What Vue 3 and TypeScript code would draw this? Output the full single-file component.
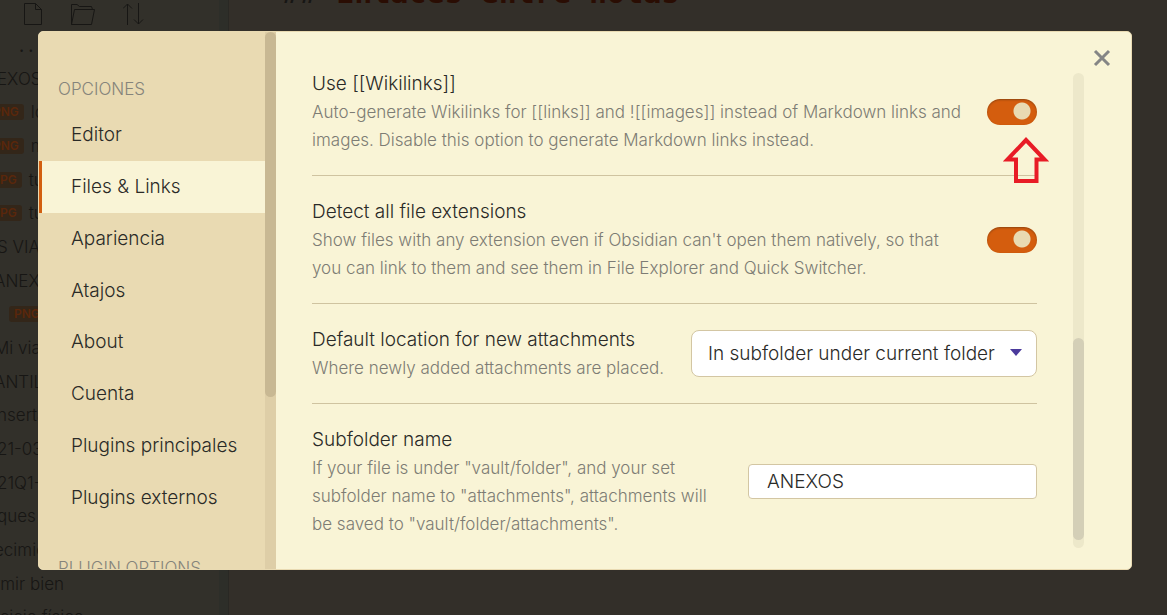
<script setup lang="ts">
import { ref } from 'vue'

interface FileRow {
  label: string
  tag?: string
  kind: 'folder' | 'page' | 'media' | 'nested'
}

const files: FileRow[] = [
  { label: 'EXOS', kind: 'folder' },
  { label: 'lo', tag: 'PNG', kind: 'media' },
  { label: 'm', tag: 'PNG', kind: 'media' },
  { label: 'tu', tag: 'JPG', kind: 'media' },
  { label: 'tu', tag: 'JPG', kind: 'media' },
  { label: 'S VIAJ', kind: 'folder' },
  { label: 'ANEXO', kind: 'page' },
  { label: '', tag: 'PNG', kind: 'nested' },
  { label: 'Mi viaj', kind: 'page' },
  { label: 'ANTIL', kind: 'page' },
  { label: 'nserta', kind: 'folder' },
  { label: '21-03', kind: 'folder' },
  { label: '21Q1-', kind: 'folder' },
  { label: 'ques', kind: 'folder' },
  { label: 'ecimie', kind: 'page' },
  { label: 'rmir bien', kind: 'page' },
  { label: 'rcicio físico', kind: 'page' },
]

const tabs = ['Editor', 'Files & Links', 'Apariencia', 'Atajos', 'About', 'Cuenta', 'Plugins principales', 'Plugins externos']
const active = ref('Files & Links')
const wikilinks = ref(true)
const allExtensions = ref(true)
const location = ref('In subfolder under current folder')
const subfolder = ref('ANEXOS')
</script>

<template>
  <div class="app">
    <aside class="explorer">
      <div class="tools">
        <svg width="20" height="24" viewBox="0 0 20 24"><path d="M1.500 1.500H12.500L18.500 7.500V22.500H1.500ZM12.500 1.500V7.500H18.500" /></svg>
        <svg width="26" height="24" viewBox="0 0 26 24"><path d="M1.500 22.500V2.500H7L9.500 4.500H21.500L22.500 7.500M1.500 22.500L4.500 7.500H24.500L21.500 22.500Z" /></svg>
        <svg width="24" height="24" viewBox="0 0 24 24"><path d="M4.500 23V2M0 6.500L4.500 2L9 6.500M15.500 1V22M11 17.500L15.500 22L20 17.500" /></svg>
      </div>
      <div class="dots">...</div>
      <ul class="files">
        <li v-for="(file, i) in files" :key="i" :class="file.kind">
          <span v-if="file.tag" class="tag">{{ file.tag }}</span>
          <span v-if="file.label">{{ file.label }}</span>
        </li>
      </ul>
    </aside>
    <div class="splitter"></div>
    <main class="note"><h2><span class="hashes">##</span> Enlaces entre notas</h2></main>

    <div class="modal" role="dialog" aria-label="Opciones">
      <nav class="side">
        <div class="menu">
          <h3>OPCIONES</h3>
          <div class="tabs">
            <button v-for="tab in tabs" :key="tab" type="button" :class="{ active: tab === active }" @click="active = tab">{{ tab }}</button>
          </div>
          <h3 class="next">PLUGIN OPTIONS</h3>
        </div>
        <div class="bar side-bar"><div class="thumb"></div></div>
      </nav>

      <section class="content">
        <div class="settings">
          <div class="setting">
            <div class="info">
              <label class="name" for="wikilinks">Use [[Wikilinks]]</label>
              <p>Auto-generate Wikilinks for [[links]] and ![[images]] instead of Markdown links and images. Disable this option to generate Markdown links instead.</p>
            </div>
            <div class="toggle-box">
              <input id="wikilinks" v-model="wikilinks" class="toggle" type="checkbox" />
              <svg class="pointer" width="46" height="50" viewBox="0 0 46 50"><path d="M23 4L41.500 23.500H33.500V45H13V23.500H4.500Z" /></svg>
            </div>
          </div>
          <div class="setting">
            <div class="info">
              <label class="name" for="extensions">Detect all file extensions</label>
              <p>Show files with any extension even if Obsidian can't open them natively, so that you can link to them and see them in File Explorer and Quick Switcher.</p>
            </div>
            <input id="extensions" v-model="allExtensions" class="toggle" type="checkbox" />
          </div>
          <div class="setting">
            <div class="info">
              <label class="name" for="location">Default location for new attachments</label>
              <p>Where newly added attachments are placed.</p>
            </div>
            <div class="select-box">
              <select id="location" v-model="location">
                <option>In subfolder under current folder</option>
              </select>
              <svg class="caret" width="12" height="7" viewBox="0 0 12 7"><path d="M0 0H12L6 7Z" /></svg>
            </div>
          </div>
          <div class="setting">
            <div class="info">
              <label class="name" for="subfolder">Subfolder name</label>
              <p>If your file is under "vault/folder", and your set subfolder name to "attachments", attachments will be saved to "vault/folder/attachments".</p>
            </div>
            <input id="subfolder" v-model="subfolder" class="text" type="text" />
          </div>
        </div>
        <div class="bar content-bar"><div class="thumb"></div></div>
        <button class="close" type="button" aria-label="Close">
          <svg width="18" height="18" viewBox="0 0 18 18"><path d="M2 2L16 16M16 2L2 16" /></svg>
        </button>
      </section>
    </div>
  </div>
</template>

<style>
body {
  margin: 0;
  overflow: hidden;
}
</style>

<style scoped>
* {
  box-sizing: border-box;
}

.app {
  position: relative;
  display: flex;
  height: 100vh;
  overflow: hidden;
  background: #332f29;
  color: #2a2a27;
  font-family: Inter, sans-serif;
  font-weight: 300;
  font-size: 19px;
}

.explorer {
  width: 219px;
  flex: none;
  background: #32302a;
  color: #171614;
  font-size: 17px;
}

.tools {
  display: flex;
  gap: 27px;
  height: 36px;
  padding: 2px 0 0 23px;
}

.tools svg {
  fill: none;
  stroke: #171614;
  stroke-width: 1;
}

.dots {
  height: 26px;
  padding-left: 19px;
  font-weight: 500;
  line-height: 20px;
  letter-spacing: 4px;
}

.files {
  display: grid;
  grid-auto-rows: 1fr;
  height: 572px;
  margin: 0;
  padding: 0;
  list-style: none;
  white-space: nowrap;
}

.files li {
  display: flex;
  align-items: center;
  gap: 7px;
}

.files .folder {
  margin-left: -3px;
}

.files .page {
  margin-left: -6px;
}

.files .media {
  margin-left: -12px;
}

.files .nested {
  padding-left: 9px;
}

.tag {
  padding: 1px 5px;
  border-radius: 3px;
  background: #332619;
  color: #5a270b;
  font-size: 12px;
  font-weight: 600;
  line-height: 14px;
}

.splitter {
  width: 10px;
  flex: none;
  background: #2d2e29;
  border-right: 1px solid #292824;
}

.note {
  flex: 1;
  padding-left: 53px;
}

.note h2 {
  margin: -25px 0 0;
  color: #2a0d03;
  font: 700 30px/36px "DejaVu Sans Mono", monospace;
}

.hashes {
  color: #171614;
  font-weight: 400;
}

.modal {
  position: absolute;
  inset: 31px 35px 45px 38px;
  display: flex;
  overflow: hidden;
  border: 1px solid #e9dab2;
  border-radius: 5px;
  background: #f9f4d6;
}

.side {
  display: flex;
  width: 237px;
  flex: none;
  background: #e9dab2;
}

.menu {
  flex: 1;
  height: 100%;
  overflow: hidden;
}

.menu h3 {
  margin: 0;
  padding: 43px 0 6px 19px;
  color: #85847b;
  font-size: 17px;
  font-weight: 300;
  line-height: 28px;
}

.menu .next {
  padding-top: 31px;
}

.tabs {
  display: grid;
  grid-auto-rows: 1fr;
  height: 414px;
}

.tabs button {
  padding: 0 0 0 29px;
  border: 0;
  border-left: 3px solid transparent;
  background: transparent;
  color: inherit;
  font: inherit;
  text-align: left;
  white-space: nowrap;
}

.tabs .active {
  border-left-color: #d25f10;
  background: #f9f4d6;
}

.bar {
  width: 11px;
  flex: none;
  border-radius: 6px;
}

.thumb {
  border-radius: 6px;
}

.side-bar {
  border-radius: 0;
  background: #decea7;
}

.side-bar .thumb {
  height: 68%;
  background: #c8b893;
}

.content {
  position: relative;
  display: flex;
  flex: 1;
  min-width: 0;
  padding: 0 47px 0 36px;
}

.settings {
  flex: 1;
  min-width: 0;
  padding-top: 16px;
}

.setting {
  display: flex;
  align-items: center;
  padding: 21px 0;
  border-bottom: 1px solid #cfc3a0;
}

.setting:last-child {
  border-bottom: 0;
}

.info {
  flex: 1;
  min-width: 0;
  margin-right: 16px;
}

.setting:last-child .info {
  margin-right: 32px;
}

.name {
  display: block;
  line-height: 29px;
}

.info p {
  margin: 0;
  color: #7d7c74;
  font-size: 17px;
  line-height: 28px;
}

.toggle {
  display: block;
  width: 50px;
  height: 26px;
  flex: none;
  margin: 0;
  border-radius: 13px;
  appearance: none;
  background: radial-gradient(circle at 35px 12px, #e9dab2 8px, transparent 9px) #d45d0e;
  box-shadow: inset 0 1px 2px #8f4410;
}

.toggle:not(:checked) {
  background: radial-gradient(circle at 14px 12px, #e9dab2 8px, transparent 9px) #c8b893;
}

.toggle-box {
  position: relative;
}

.pointer {
  position: absolute;
  top: 37px;
  left: 16px;
  fill: none;
  stroke: #e81c26;
  stroke-width: 4;
}

.select-box {
  position: relative;
}

select {
  display: block;
  width: 346px;
  height: 47px;
  padding: 0 32px 0 16px;
  border: 1px solid #d3c6a3;
  border-radius: 8px;
  appearance: none;
  background: #fff;
  color: inherit;
  font: inherit;
}

.caret {
  position: absolute;
  top: 19px;
  right: 15px;
  fill: #4b3a9c;
  pointer-events: none;
}

.text {
  width: 289px;
  height: 35px;
  flex: none;
  padding: 0 18px;
  border: 1px solid #d3c6a3;
  border-radius: 4px;
  background: #fff;
  color: inherit;
  font: inherit;
}

.content-bar {
  margin: 41px 0 21px 36px;
  padding-top: 265px;
  background: #ede8ca;
}

.content-bar .thumb {
  height: 202px;
  background: #d4cfb7;
}

.close {
  position: absolute;
  top: 17px;
  right: 20px;
  padding: 0;
  border: 0;
  background: none;
}

.close svg {
  display: block;
  fill: none;
  stroke: #858585;
  stroke-width: 3;
}
</style>
